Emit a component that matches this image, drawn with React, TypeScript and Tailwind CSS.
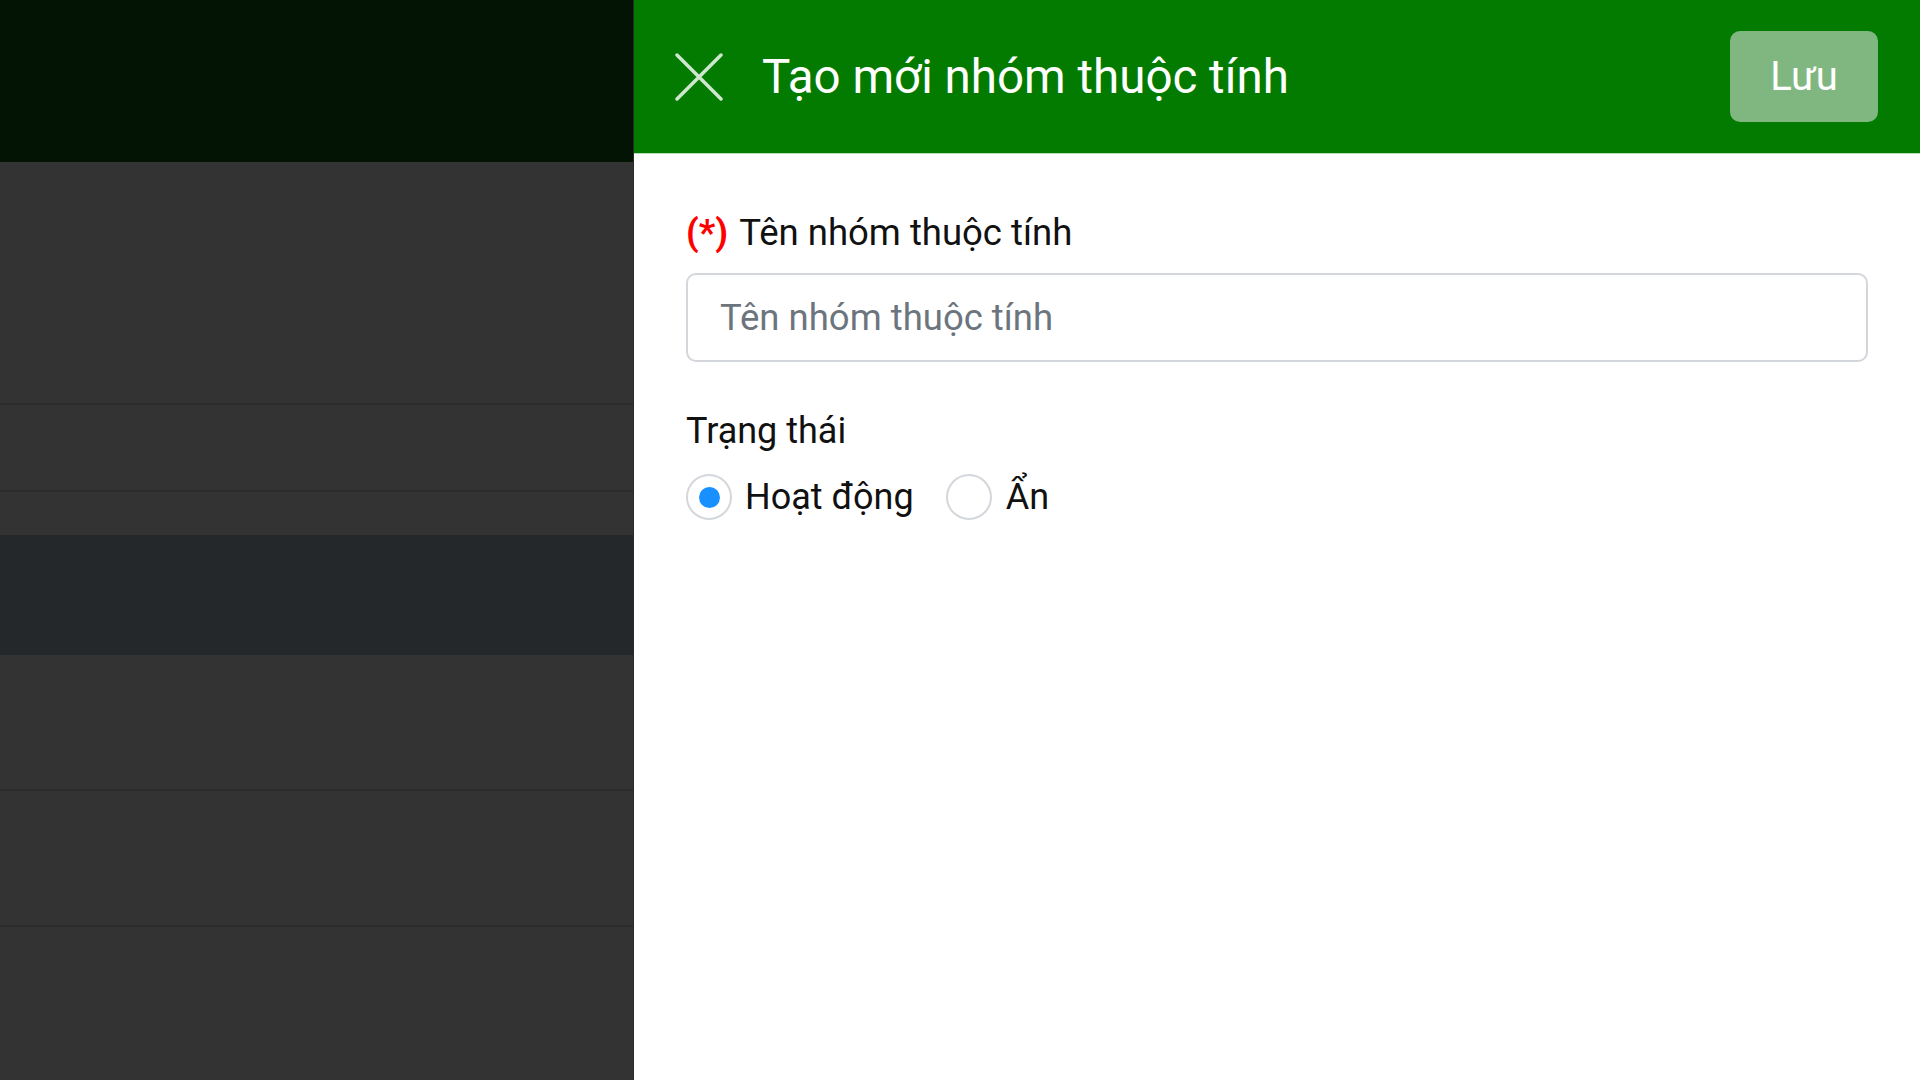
import { useState } from 'react';

export default function App() {
  const [status, setStatus] = useState<'active' | 'hidden'>('active');

  return (
    <div className="flex h-[1080px] w-[1920px] overflow-hidden font-['Roboto',sans-serif]">
      {/* Background list (dimmed) */}
      <div className="flex w-[634px] shrink-0 flex-col border-r border-[#2a2a2a] bg-[#333333]">
        <div className="h-[162px] bg-[#041404]" />
        <div className="h-[243px] border-b-2 border-[#2b2b2b]" />
        <div className="h-[87px] border-b-2 border-[#2b2b2b]" />
        <div className="h-[43px]" />
        <div className="h-[120px] bg-[#24282a]" />
        <div className="h-[136px] border-b-2 border-[#2b2b2b]" />
        <div className="h-[136px] border-b-2 border-[#2b2b2b]" />
        <div className="flex-1" />
      </div>

      {/* Drawer */}
      <div className="flex flex-1 flex-col bg-white">
        <div className="flex h-[154px] items-center border-b border-[#b8dcb8] bg-[#037b00] pl-[41px] pr-[42px]">
          <button className="flex h-[48px] w-[48px] items-center justify-center">
            <svg width="48" height="48" viewBox="0 0 48 48" fill="none">
              <path d="M2 2L46 46M46 2L2 46" stroke="#cfe6cf" strokeWidth="3.5" strokeLinecap="round" />
            </svg>
          </button>
          <h1 className="ml-[39px] flex-1 text-[47.5px] leading-[56px] font-normal text-white">
            Tạo mới nhóm thuộc tính
          </h1>
          <button className="h-[91px] w-[148px] rounded-[10px] bg-[#80b780] text-[40px] leading-[48px] text-white">
            Lưu
          </button>
        </div>

        <div className="flex flex-col px-[52px] pt-[58px]">
          <label className="flex items-baseline gap-[11px] text-[36.5px] leading-[42px] text-[#111111]">
            <span className="font-bold text-[#ff0000]">(*)</span>
            <span>Tên nhóm thuộc tính</span>
          </label>
          <input
            type="text"
            placeholder="Tên nhóm thuộc tính"
            className="mt-[19px] h-[89px] w-full rounded-[10px] border-2 border-[#d3d7db] px-[32px] text-[36.5px] text-[#222] placeholder:text-[#6c757d] focus:outline-none"
          />

          <p className="mt-[48px] text-[36px] leading-[42px] text-[#111111]">Trạng thái</p>
          <div className="mt-[22px] flex items-center">
            <label className="flex cursor-pointer items-center" onClick={() => setStatus('active')}>
              <span className="flex h-[46px] w-[46px] items-center justify-center rounded-full border-2 border-[#d4d7db]">
                {status === 'active' && <span className="h-[21px] w-[21px] rounded-full bg-[#1890ff]" />}
              </span>
              <span className="ml-[13px] text-[36px] leading-[46px] text-[#111111]">Hoạt động</span>
            </label>
            <label className="ml-[32px] flex cursor-pointer items-center" onClick={() => setStatus('hidden')}>
              <span className="flex h-[46px] w-[46px] items-center justify-center rounded-full border-2 border-[#d4d7db]">
                {status === 'hidden' && <span className="h-[21px] w-[21px] rounded-full bg-[#1890ff]" />}
              </span>
              <span className="ml-[14px] text-[36px] leading-[46px] text-[#111111]">Ẩn</span>
            </label>
          </div>
        </div>
      </div>
    </div>
  );
}
